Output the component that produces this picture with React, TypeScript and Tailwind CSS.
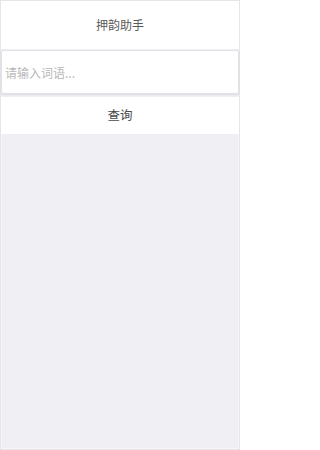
export default function App() {
  return (
    <div
      className="w-[240px] h-[450px] flex flex-col bg-[#efeff4] border border-[#e6e6ea]"
      style={{ fontFamily: '"Noto Sans CJK SC", "Noto Sans", sans-serif' }}
    >
      {/* Título */}
      <div className="h-[48px] bg-white flex items-center justify-center text-[12px] text-[#5a5a5a]">
        押韵助手
      </div>

      {/* Campo */}
      <div className="mt-[1px] h-[44px] bg-white border border-[#e2e2e6] rounded-[2px] shadow-[0_1px_2px_rgba(0,0,0,0.08)] flex items-center">
        <input
          className="w-full h-full px-[3px] bg-transparent outline-none text-[12px] text-[#333] placeholder:text-[#b8b8b8]"
          placeholder="请输入词语..."
        />
      </div>

      {/* Botão */}
      <button className="mt-[3px] h-[37px] bg-white flex items-center justify-center text-[12.5px] text-[#4a4a4a]">
        查询
      </button>

      <div className="flex-1 border-x border-b border-[#f6f6f8]" />
    </div>
  );
}
